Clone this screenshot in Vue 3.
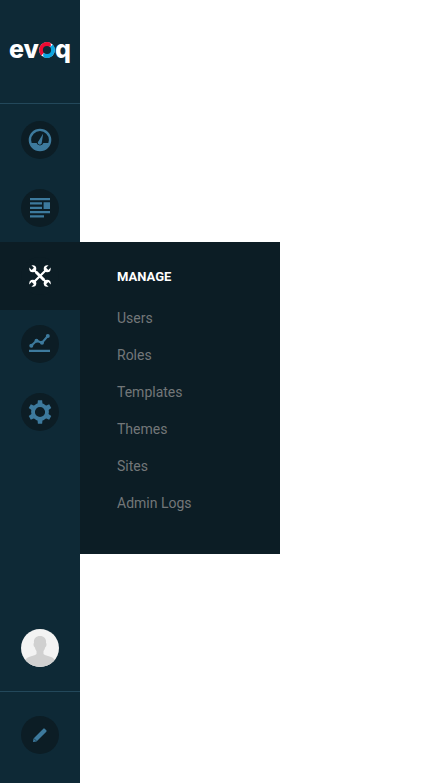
<script setup>
import { ref } from 'vue'

const active = ref('manage')
const sections = [
  { id: 'dashboard', label: 'Dashboard' },
  { id: 'content', label: 'Content' },
  { id: 'manage', label: 'Manage', links: ['Users', 'Roles', 'Templates', 'Themes', 'Sites', 'Admin Logs'] },
  { id: 'analytics', label: 'Analytics' },
  { id: 'settings', label: 'Settings' },
]
const teeth = [0, 60, 120, 180, 240, 300]
</script>

<template>
  <aside class="sidebar">
    <a class="logo" href="#">
      <span>ev</span>
      <svg class="ring" width="16" height="16" viewBox="0 0 16 16" aria-hidden="true">
        <circle cx="8" cy="8" r="7.800" fill="#fff" />
        <path d="M2.200 13.400A7.900 7.900 0 0 1 11.600 1L12 4.500L8 5L5 8L5 11Z" fill="#ee0a32" />
        <path d="M13.800 2.600A7.900 7.900 0 0 1 4.400 15L4 11.500L8 11L11 8L11 5Z" fill="#0ba5e1" />
        <circle cx="8" cy="8" r="4.100" fill="#0e2936" />
      </svg>
      <span>q</span>
    </a>

    <nav class="menu">
      <div v-for="s in sections" :key="s.id" class="item" :class="{ active: active === s.id }">
        <button class="round" type="button" :aria-label="s.label" @click="active = s.id">
          <svg v-if="s.id === 'dashboard'" width="24" height="24" viewBox="0 0 24 24">
            <circle cx="12" cy="12" r="10.100" fill="none" stroke="currentColor" stroke-width="2.400" />
            <path d="M2 15H8.600A3.600 3.600 0 0 0 15.400 15H22A10.500 10.500 0 0 1 2 15Z" fill="currentColor" />
            <path d="M15.200 5.500L13.800 14.500A2 2 0 1 1 10.500 13.200Z" fill="currentColor" />
          </svg>
          <svg v-else-if="s.id === 'content'" width="22" height="22" viewBox="0 0 22 22" fill="currentColor">
            <path d="M1 1H21V3.300H1ZM1 5.300H13V7.600H1ZM1 9.700H13V12H1ZM1 14H21V16.300H1ZM1 18.300H15V20.600H1ZM14.600 5.300H21V12H14.600Z" />
          </svg>
          <svg v-else-if="s.id === 'manage'" width="24" height="24" viewBox="0 0 24 24">
            <path d="M6 6L18 18M18 6L6 18" stroke="currentColor" stroke-width="2.200" />
            <g fill="currentColor">
              <circle cx="4.800" cy="4.800" r="3.500" /><circle cx="19.200" cy="4.800" r="3.500" />
              <circle cx="4.800" cy="19.200" r="3.500" /><circle cx="19.200" cy="19.200" r="3.500" />
            </g>
            <path d="M0 0L4.800 4.800M24 0L19.200 4.800M0 24L4.800 19.200M24 24L19.200 19.200" stroke="#0c1d25" stroke-width="3.200" />
            <path d="M8 8L16 16" stroke="currentColor" stroke-width="2.800" />
          </svg>
          <svg v-else-if="s.id === 'analytics'" width="22" height="22" viewBox="0 0 22 22" fill="currentColor">
            <path d="M2.300 12.700L7.500 7.700L13 9.700L18.800 3" fill="none" stroke="currentColor" stroke-width="2" />
            <circle cx="2.300" cy="12.700" r="2" /><circle cx="7.500" cy="7.700" r="2" />
            <circle cx="13" cy="9.700" r="2" /><circle cx="18.800" cy="3" r="2" />
            <path d="M0 16.700H21V19H0Z" />
          </svg>
          <svg v-else width="24" height="24" viewBox="0 0 24 24">
            <circle cx="12" cy="12" r="7" fill="none" stroke="currentColor" stroke-width="3.800" />
            <path v-for="t in teeth" :key="t" d="M9.400 5L9.900 0.200H14.100L14.600 5Z" :transform="`rotate(${t} 12 12)`" fill="currentColor" />
          </svg>
        </button>
        <section v-if="s.links && active === s.id" class="flyout">
          <h2>{{ s.label }}</h2>
          <ul>
            <li v-for="l in s.links" :key="l"><a href="#">{{ l }}</a></li>
          </ul>
        </section>
      </div>
    </nav>

    <button class="round avatar" type="button" aria-label="Account">
      <svg width="38" height="38" viewBox="0 0 38 38">
        <path d="M19 7C23.500 7 25.500 10 25 14Q26 15 25 17.500Q24 18 24 19Q23.500 21 22.500 22V25Q23 26 27 27Q32 28 34 31A19 19 0 0 1 4 31Q6 28 11 27Q15 26 15.500 25V22Q14.500 21 14 19Q14 18 13 17.500Q12 15 13 14C12.500 10 14.500 7 19 7Z" fill="#d0d0d0" />
      </svg>
    </button>

    <div class="edit">
      <button class="round" type="button" aria-label="Edit page">
        <svg width="16" height="16" viewBox="0 0 16 16" fill="currentColor">
          <path d="M1 15L1.500 11.500L11.300 1.700Q12 1 12.700 1.700L14.300 3.300Q15 4 14.300 4.700L4.500 14.500Z" />
          <path d="M1.800 11.400L4.600 14.200" stroke="#0c1d25" stroke-width="0.600" />
        </svg>
      </button>
    </div>
  </aside>
</template>

<style>
body {
  background: #fff;
}
</style>

<style scoped>
.sidebar {
  box-sizing: border-box;
  display: flex;
  flex-direction: column;
  align-items: stretch;
  width: 80px;
  min-height: 100vh;
  background: #0e2936;
  font-family: Roboto, "Liberation Sans", sans-serif;
}
.logo {
  display: flex;
  align-items: center;
  justify-content: center;
  box-sizing: border-box;
  height: 104px;
  border-bottom: 1px solid #23485b;
  color: #fff;
  font: 800 25px/32px Inter, sans-serif;
  text-decoration: none;
}
.logo span {
  padding-bottom: 6px;
}
.ring {
  flex: none;
  margin-bottom: 4px;
}
.menu {
  padding-top: 2px;
}
.item {
  position: relative;
  display: flex;
  align-items: center;
  justify-content: center;
  height: 68px;
}
.round {
  display: flex;
  align-items: center;
  justify-content: center;
  width: 38px;
  height: 38px;
  padding: 0;
  border: 0;
  border-radius: 50%;
  background: #0c1d25;
  color: #3d7a9d;
  cursor: pointer;
  overflow: hidden;
}
.item.active {
  background: #0c1d25;
}
.active .round {
  color: #fff;
}
.flyout {
  position: absolute;
  top: 0;
  left: 100%;
  box-sizing: border-box;
  width: 200px;
  padding: 25px 37px 32px;
  background: #0c1d25;
}
h2 {
  margin: 0 0 13px;
  color: #fff;
  font-size: 13px;
  font-weight: 700;
  line-height: 20px;
  text-transform: uppercase;
}
ul {
  margin: 0;
  padding: 0;
  list-style: none;
}
li a {
  display: block;
  color: #737779;
  font-size: 14px;
  line-height: 37px;
  text-decoration: none;
  white-space: nowrap;
}
.avatar {
  margin: auto auto 24px;
  background: #f3f3f3;
}
.edit {
  display: flex;
  justify-content: center;
  padding: 24px 0 29px;
  border-top: 1px solid #23485b;
}
</style>
